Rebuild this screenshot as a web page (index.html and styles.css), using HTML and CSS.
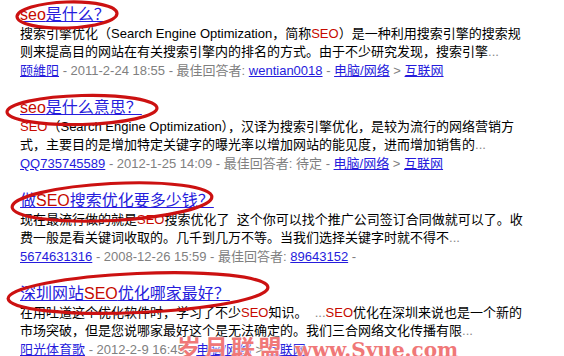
FILE: index.html
```html
<!DOCTYPE html>
<html lang="zh-CN">
<head>
    <meta charset="UTF-8">
    <title>seo是什么</title>
    <link rel="stylesheet" href="styles.css">
</head>
<body>
    <div class="results">
        <div class="result">
            <a class="title" href="#"><em>seo</em>是什么？</a>
            <p class="abstract">搜索引擎优化（Search Engine Optimization，简称<em>SEO</em>）是一种利用搜索引擎的搜索规<br>则来提高目的网站在有关搜索引擎内的排名的方式。由于不少研究发现，搜索引擎<span class="dots">...</span></p>
            <div class="meta"><a href="#">颐維阳</a> - 2011-2-24 18:55 - 最佳回答者: <a href="#">wentian0018</a> - <a href="#">电脑/网络</a> &gt; <a href="#">互联网</a></div>
        </div>

        <div class="result">
            <a class="title" href="#"><em>seo</em>是什么意思？</a>
            <p class="abstract"><em>SEO</em>（Search Engine Optimization），汉译为搜索引擎优化，是较为流行的网络营销方<br>式，主要目的是增加特定关键字的曝光率以增加网站的能见度，进而增加销售的<span class="dots">...</span></p>
            <div class="meta"><a href="#">QQ735745589</a> - 2012-1-25 14:09 - 最佳回答者: 待定 - <a href="#">电脑/网络</a> &gt; <a href="#">互联网</a></div>
        </div>

        <div class="result">
            <a class="title" href="#">做<em>SEO</em>搜索优化要多少钱？</a>
            <p class="abstract">现在最流行做的就是<em>SEO</em>搜索优化了&nbsp; 这个你可以找个推广公司签订合同做就可以了。收<br>费一般是看关键词收取的。几千到几万不等。当我们选择关键字时就不得不<span class="dots">...</span></p>
            <div class="meta"><a href="#">5674631316</a> - 2008-12-26 15:59 - 最佳回答者: <a href="#">89643152</a> -</div>
        </div>

        <div class="result">
            <a class="title" href="#">深圳网站<em>SEO</em>优化哪家最好？</a>
            <p class="abstract">在用吐道这个优化软件时，学习了不少<em>SEO</em>知识。&nbsp; <span class="dots">...</span><em>SEO</em>优化在深圳来说也是一个新的<br>市场突破，但是您说哪家最好这个是无法确定的。我们三合网络文化传播有限<span class="dots">...</span></p>
            <div class="meta"><a href="#">阳光体育歌</a> - 2012-2-9 16:45 - <a href="#">电脑/网络</a> &gt; <a href="#">互联网</a></div>
        </div>
    </div>

    <svg class="marks" width="564" height="356" viewBox="0 0 564 356">
        <ellipse cx="67" cy="15" rx="50" ry="13" transform="rotate(-2 67 15)"/>
        <ellipse cx="82" cy="110" rx="75" ry="14.5" transform="rotate(-1.5 82 110)"/>
        <ellipse cx="112" cy="202" rx="100" ry="18.5" transform="rotate(-3 112 202)"/>
        <ellipse cx="138" cy="293" rx="130" ry="19.5" transform="rotate(-2.5 138 293)"/>
    </svg>

    <div class="watermark">岁月联盟 <span>www.Syue.com</span></div>
</body>
</html>
```

FILE: styles.css
```css
body {
    margin: 0;
    height: 356px;
    background: #fff;
    font-family: "Liberation Sans", "Noto Sans CJK SC", sans-serif;
    overflow: hidden;
}
.results {
    padding: 5px 0 0 20px;
}
.result {
    margin-bottom: 17px;
    white-space: nowrap;
}
.result:last-child {
    margin-bottom: 0;
}
.title {
    display: block;
    font-size: 16px;
    line-height: 20px;
    color: #261cdc;
    text-decoration: underline;
}
em {
    font-style: normal;
    color: #c60a00;
}
.abstract {
    margin: 0;
    font-size: 13px;
    line-height: 18px;
    color: #000;
}
.dots {
    color: #888;
}
.meta {
    font-size: 13px;
    line-height: 20px;
    color: #808080;
}
.meta a {
    color: #261cdc;
}
.marks {
    position: absolute;
    top: 0;
    left: 0;
}
.marks ellipse {
    fill: none;
    stroke: #cc1111;
    stroke-width: 3.2;
}
.watermark {
    position: absolute;
    left: 177px;
    top: 335px;
    font-size: 24px;
    font-weight: bold;
    line-height: 28px;
    letter-spacing: 3px;
    color: #f07878;
    text-shadow: 0 0 2px #fff, 0 0 2px #fff;
    white-space: nowrap;
}
.watermark span {
    font-family: "DejaVu Serif", serif;
    font-size: 20px;
    letter-spacing: 0;
}
```
